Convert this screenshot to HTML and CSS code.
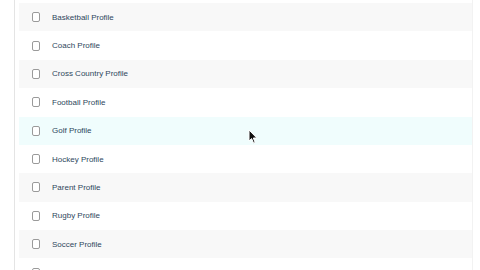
FILE: index.html
```html
<!DOCTYPE html>
<html>
<head>
<meta charset="utf-8">
<link rel="stylesheet" href="styles.css">
</head>
<body>
<div class="panel">
  <ul class="list">
    <li class="row odd"><span class="box"></span><span class="label">Basketball Profile</span></li>
    <li class="row"><span class="box"></span><span class="label">Coach Profile</span></li>
    <li class="row odd"><span class="box"></span><span class="label">Cross Country Profile</span></li>
    <li class="row"><span class="box"></span><span class="label">Football Profile</span></li>
    <li class="row hover"><span class="box"></span><span class="label">Golf Profile</span></li>
    <li class="row"><span class="box"></span><span class="label">Hockey Profile</span></li>
    <li class="row odd"><span class="box"></span><span class="label">Parent Profile</span></li>
    <li class="row"><span class="box"></span><span class="label">Rugby Profile</span></li>
    <li class="row odd"><span class="box"></span><span class="label">Soccer Profile</span></li>
    <li class="row"><span class="box"></span><span class="label">Softball Profile</span></li>
  </ul>
</div>
<svg class="cursor" width="10" height="16" viewBox="0 0 10 16"><path d="M1 1 L1 12 L3.6 9.6 L5.6 14.2 L7.2 13.5 L5.3 9 L8.8 9 Z" fill="#111" stroke="#fff" stroke-width="1"/></svg>
</body>
</html>
```
FILE: styles.css
```css
html, body {
  margin: 0;
  padding: 0;
  background: #ffffff;
  width: 480px;
  height: 270px;
  overflow: hidden;
  font-family: "Liberation Sans", Arial, sans-serif;
}
.panel {
  margin-left: 14px;
  width: 459px;
  height: 270px;
  border-left: 1px solid #e4e4e4;
  border-right: 1px solid #f2f2f2;
  padding-top: 3px;
  box-sizing: border-box;
}
.list {
  list-style: none;
  margin: 0 0 0 4px;
  padding: 0;
}
.row {
  height: 28.375px;
  display: flex;
  align-items: center;
  padding-left: 13px;
}
.row.odd {
  background: #f8f8f8;
}
.row.hover {
  background: #f0fdfd;
}
.box {
  width: 6px;
  height: 8px;
  border: 1px solid #9a9a9a;
  border-radius: 2px;
  background: #fff;
  flex: none;
}
.label {
  margin-left: 12px;
  font-size: 8px;
  color: #2e475c;
}
.cursor {
  position: absolute;
  left: 248px;
  top: 129px;
}
```
